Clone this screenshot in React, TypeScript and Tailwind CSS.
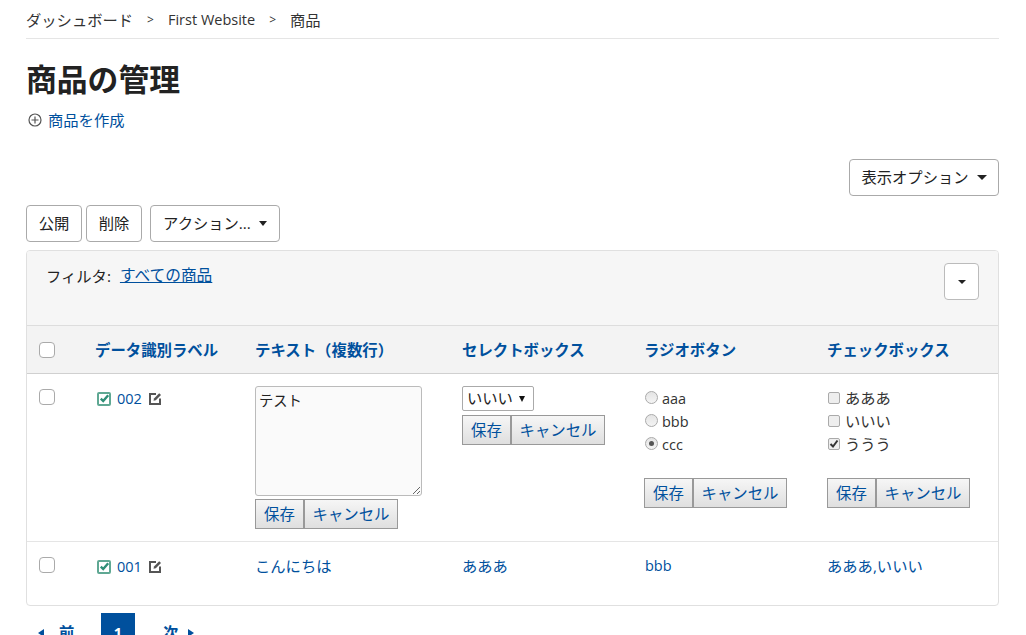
const font = "font-['Open_Sans','Noto_Sans_CJK_JP',sans-serif]";

function Caret({ big = false }: { big?: boolean }) {
  return big ? (
    <span className="inline-block w-0 h-0 border-x-[5px] border-x-transparent border-t-[5px] border-t-[#222]" />
  ) : (
    <span className="inline-block w-0 h-0 border-x-[4.5px] border-x-transparent border-t-[5px] border-t-[#222]" />
  );
}

function PlainButton({ label, className = "", caret = false, big = false }: { label: string; className?: string; caret?: boolean; big?: boolean }) {
  return (
    <button
      type="button"
      className={`inline-flex items-center justify-center gap-2 h-[37px] bg-white border border-[#aaa] rounded-[4px] text-[#222] ${className}`}
    >
      {label}
      {caret && <Caret big={big} />}
    </button>
  );
}

function StatusIcon() {
  return (
    <svg width="14" height="14" viewBox="0 0 14 14" className="shrink-0">
      <rect x="1" y="1" width="12" height="12" rx="1" fill="none" stroke="#5fa893" strokeWidth="2" />
      <path d="M3.8 6.6 6.2 9 11.2 3.2" fill="none" stroke="#2f8f77" strokeWidth="2.4" />
    </svg>
  );
}

function EditIcon() {
  return (
    <svg width="13" height="13" viewBox="0 0 13 13" className="shrink-0">
      <path d="M7 2H1v10h10V6.5" fill="none" stroke="#555" strokeWidth="2" />
      <path d="M4.5 8.7 5 6.4 10.2 1.2 12 3 6.8 8.2Z" fill="#555" />
    </svg>
  );
}

function Check({ className = "" }: { className?: string }) {
  return <span className={`block w-4 h-4 bg-white border border-[#aaa] rounded-[4px] ${className}`} />;
}

function SaveCancel({ className = "" }: { className?: string }) {
  const btn =
    "h-[30px] pt-[2px] border border-[#999] bg-linear-to-b from-[#f6f6f6] to-[#dfdfdf] text-[#00509d] text-[15.4px] leading-none";
  return (
    <div className={`flex ${className}`}>
      <button type="button" className={`${btn} w-[49px]`}>保存</button>
      <button type="button" className={`${btn} w-[94px]`}>キャンセル</button>
    </div>
  );
}

function Radio({ label, on = false }: { label: string; on?: boolean }) {
  return (
    <div className="flex items-center h-[23px]">
      <span className="ml-[1px] w-[13px] h-[13px] rounded-full border border-[#aaa] bg-linear-to-b from-[#e4e4e4] to-[#f4f4f4] flex items-center justify-center mb-[2px]">
        {on && <span className="w-[5px] h-[5px] rounded-full bg-[#555]" />}
      </span>
      <span className="ml-[4px] text-[14.5px] text-[#333]">{label}</span>
    </div>
  );
}

function CheckRow({ label, on = false }: { label: string; on?: boolean }) {
  return (
    <div className="flex items-center h-[23px]">
      <span className="relative ml-[1px] w-3 h-3 rounded-[2px] border border-[#aaa] bg-[#eee] mb-[2px]">
        {on && (
          <svg width="10" height="10" viewBox="0 0 10 10" className="absolute left-0 top-0">
            <path d="M1.5 5 4 7.5 8.5 1.5" fill="none" stroke="#333" strokeWidth="2" />
          </svg>
        )}
      </span>
      <span className="ml-[5px] text-[#333]">{label}</span>
    </div>
  );
}

function IdCell({ id }: { id: string }) {
  return (
    <div className="flex items-center">
      <span className="ml-[2px]"><StatusIcon /></span>
      <a className="ml-[6px] text-[14.5px] text-[#00509d]">{id}</a>
      <span className="ml-[7px]"><EditIcon /></span>
    </div>
  );
}

const headers = [
  { label: "データ識別ラベル", w: "w-[160px]" },
  { label: "テキスト（複数行）", w: "w-[207px]" },
  { label: "セレクトボックス", w: "w-[182px]" },
  { label: "ラジオボタン", w: "w-[183px]" },
  { label: "チェックボックス", w: "" },
];

export default function App() {
  return (
    <div className={`${font} h-[635px] overflow-hidden bg-white pl-[26px] pr-[27px] text-[15.3px] text-[#222]`}>
      {/* Breadcrumb */}
      <div className="flex items-center h-[39px] pt-[2px] border-b border-[#e5e5e5] text-[#333]">
        <span>ダッシュボード</span>
        <span className="mx-[14px] text-[12px]">&gt;</span>
        <span className="text-[14.5px]">First Website</span>
        <span className="mx-[14px] text-[12px]">&gt;</span>
        <span>商品</span>
      </div>

      <h1 className="mt-[20px] h-[40px] text-[30.8px] leading-[40px] font-bold text-[#222]">商品の管理</h1>

      <div className="flex items-center mt-[11px] h-[20px]">
        <svg width="14" height="14" viewBox="0 0 14 14" className="ml-[2px]">
          <circle cx="7" cy="7" r="6" fill="none" stroke="#555" strokeWidth="1.2" />
          <path d="M7 3.5v7M3.5 7h7" stroke="#555" strokeWidth="1.2" />
        </svg>
        <a className="ml-[6px] text-[#00509d]">商品を作成</a>
      </div>

      <div className="flex justify-end mt-[29px]">
        <PlainButton label="表示オプション" caret big className="w-[150px]" />
      </div>

      {/* Bulk actions */}
      <div className="flex mt-[9px]">
        <PlainButton label="公開" className="w-[56px]" />
        <PlainButton label="削除" className="w-[56px] ml-[4px]" />
        <PlainButton label="アクション..." caret className="w-[130px] ml-[8px]" />
      </div>

      {/* Table card */}
      <div className="mt-[8px] border border-[#e0e0e0] rounded-[4px] overflow-hidden">
        <div className="flex justify-between h-[75px] bg-[#f6f6f6] pl-[19px] pr-[19px] pt-[12px] border-b border-[#ddd]">
          <div className="flex h-[26px] items-center">
            <span>フィルタ:</span>
            <a className="ml-[9px] text-[15.7px] text-[#00509d] underline">すべての商品</a>
          </div>
          <button type="button" className="w-[35px] h-[37px] bg-white border border-[#bbb] rounded-[4px] flex items-center justify-center">
            <span className="inline-block w-0 h-0 border-x-[4px] border-x-transparent border-t-[4px] border-t-[#222]" />
          </button>
        </div>

        <div className="flex items-center h-[48px] pt-[2px] bg-[#f3f3f3] border-b border-[#d0d0d0] text-[15.4px]">
          <div className="w-[68px] pl-[12px] -mt-[2px]"><Check /></div>
          {headers.map((h) => (
            <div key={h.label} className={`${h.w} font-bold text-[#00509d]`}>{h.label}</div>
          ))}
        </div>

        {/* Row 002 */}
        <div className="flex h-[168px] border-b border-[#e5e5e5] pt-[12px]">
          <div className="w-[68px] pl-[12px] pt-[3px]"><Check /></div>
          <div className="w-[160px] pt-[2px]"><IdCell id="002" /></div>
          <div className="w-[207px]">
            <div className="relative w-[167px] h-[110px] bg-[#fafafa] border border-[#bbb] rounded-[3px] px-[3px] py-[3px] text-[14.3px] text-[#222]">
              テスト
              <svg width="10" height="10" viewBox="0 0 10 10" className="absolute right-0 bottom-0">
                <path d="M9 2 2 9M9 6 6 9" stroke="#666" strokeWidth="1" />
              </svg>
            </div>
            <SaveCancel className="mt-[3px]" />
          </div>
          <div className="w-[182px]">
            <div className="flex items-center justify-between w-[72px] h-[25px] bg-white border border-[#aaa] rounded-[2px] pl-[4px] pr-[8px] text-[#222]">
              いいい
              <span className="inline-block w-0 h-0 border-x-[3.5px] border-x-transparent border-t-[6px] border-t-[#111]" />
            </div>
            <SaveCancel className="mt-[4px]" />
          </div>
          <div className="w-[183px] pt-[1px]">
            <Radio label="aaa" />
            <Radio label="bbb" />
            <Radio label="ccc" on />
            <SaveCancel className="mt-[22px]" />
          </div>
          <div className="pt-[1px]">
            <CheckRow label="あああ" />
            <CheckRow label="いいい" />
            <CheckRow label="ううう" on />
            <SaveCancel className="mt-[22px]" />
          </div>
        </div>

        {/* Row 001 */}
        <div className="flex h-[63px] pt-[13px] text-[#00509d]">
          <div className="w-[68px] pl-[12px] pt-[2px]"><Check /></div>
          <div className="w-[160px] pt-[1px]"><IdCell id="001" /></div>
          <div className="w-[207px]">こんにちは</div>
          <div className="w-[182px]">あああ</div>
          <div className="w-[183px] pl-[1px] text-[14.5px]">bbb</div>
          <div>あああ,いいい</div>
        </div>
      </div>

      {/* Pagination */}
      <div className="flex mt-[7px] text-[#00509d] font-bold">
        <div className="flex items-center h-[34px] ml-[12px] pt-[5px] w-[63px]">
          <span className="inline-block w-0 h-0 border-y-[4px] border-y-transparent border-r-[6px] border-r-[#00509d]" />
          <span className="ml-[15px]">前</span>
        </div>
        <div className="flex items-center justify-center w-[34px] h-[34px] bg-[#00509d] text-white pt-[5px] text-[14.5px]">1</div>
        <div className="flex items-center h-[34px] ml-[28px] pt-[5px]">
          <span>次</span>
          <span className="ml-[10px] inline-block w-0 h-0 border-y-[4px] border-y-transparent border-l-[6px] border-l-[#00509d]" />
        </div>
      </div>
    </div>
  );
}
